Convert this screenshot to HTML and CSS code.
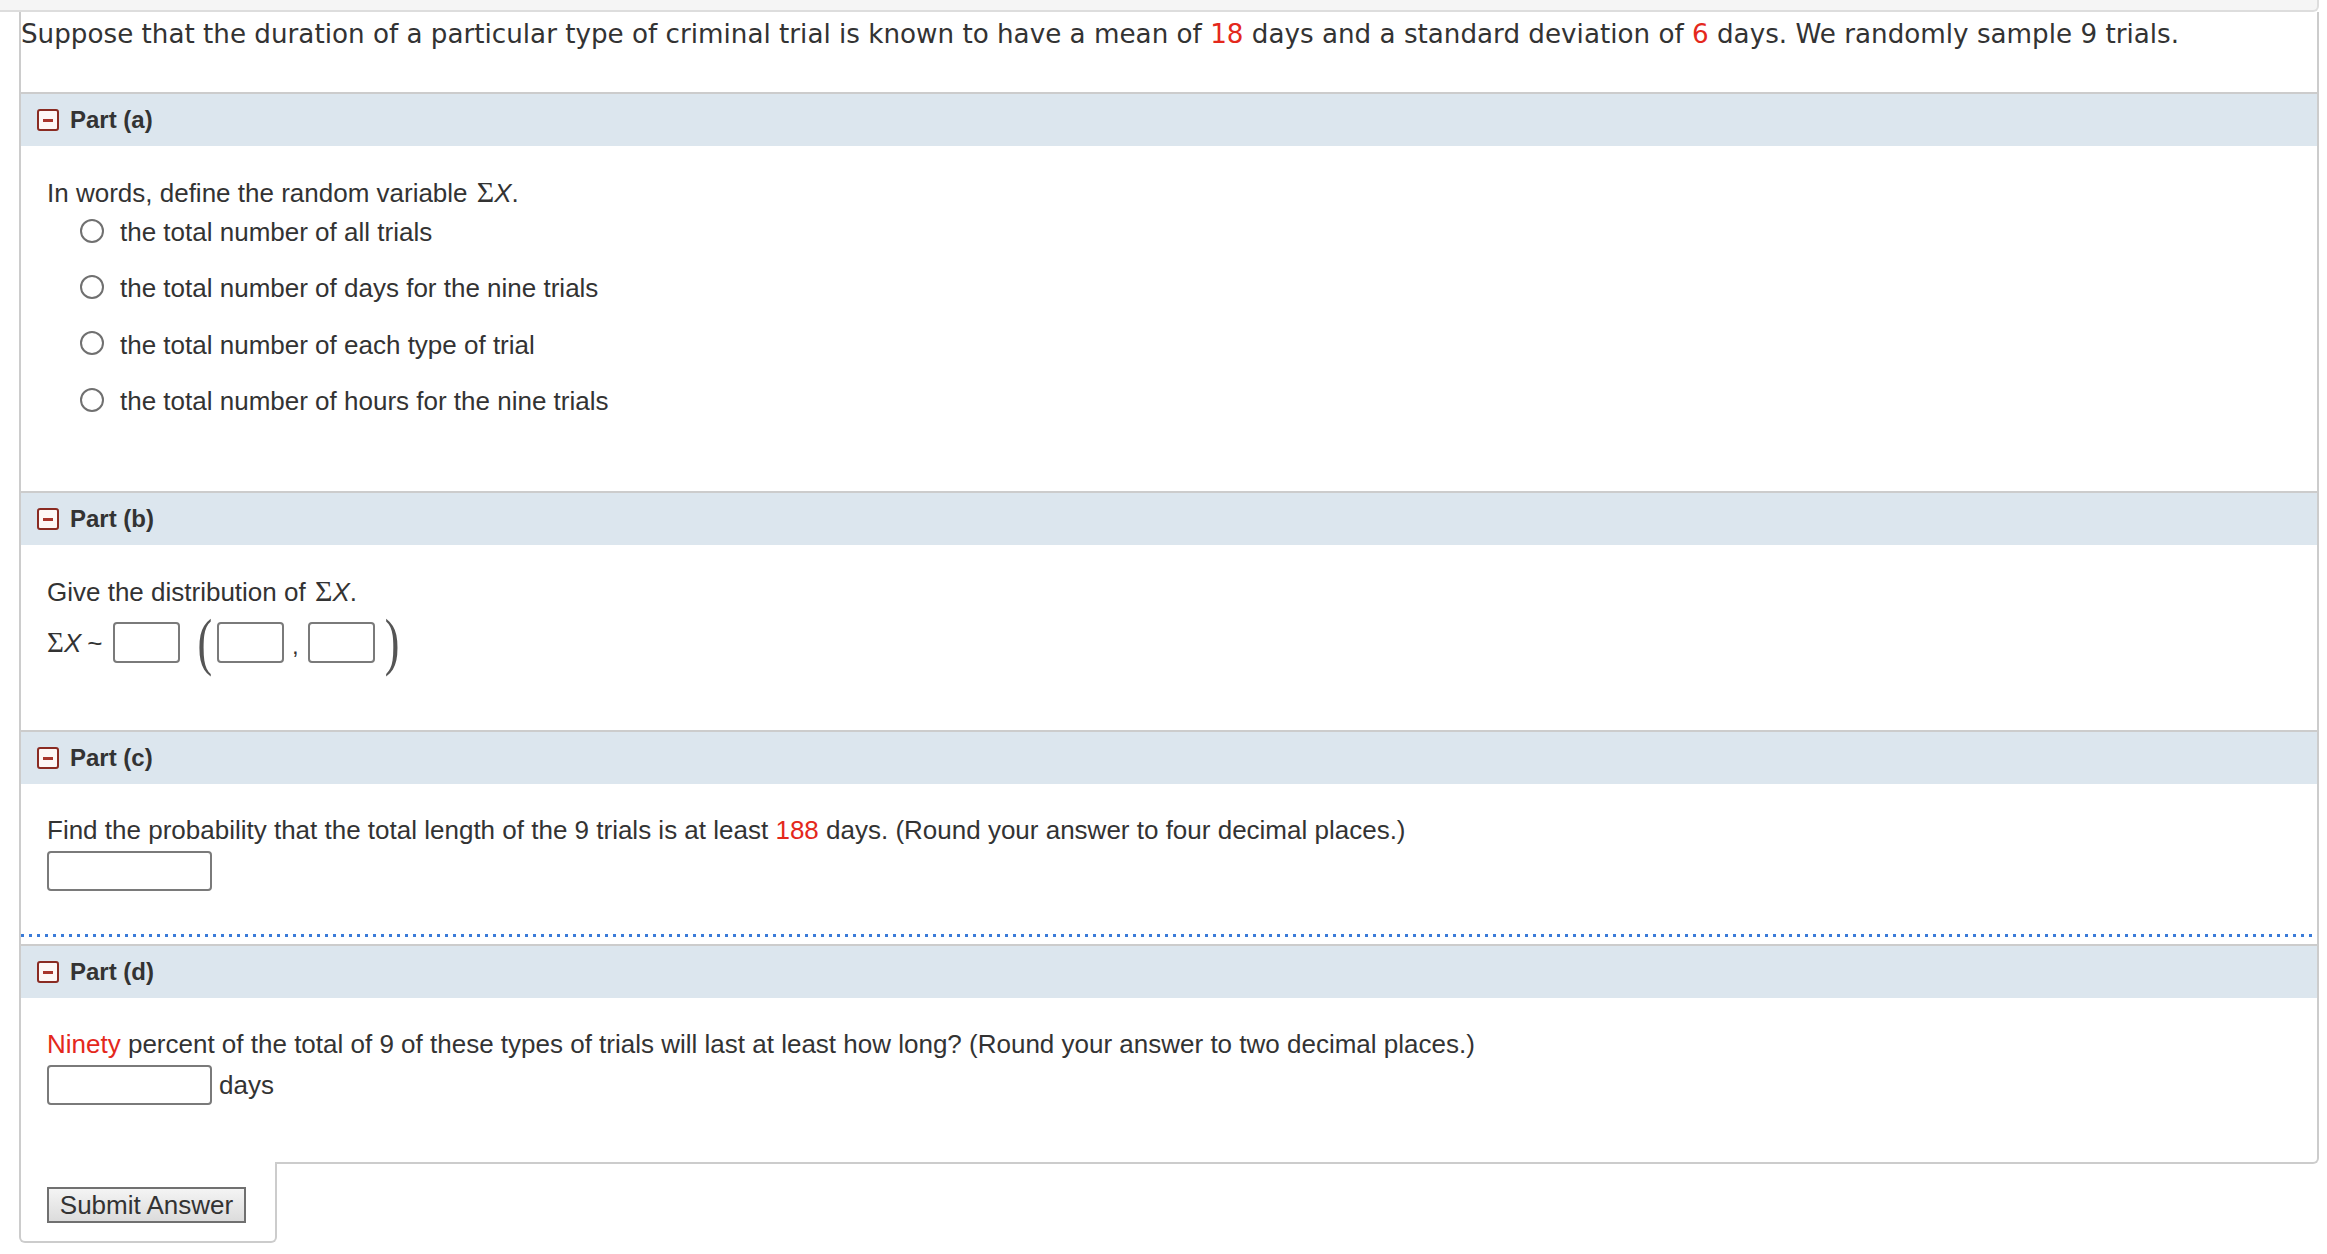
FILE: index.html
```html
<!DOCTYPE html>
<html lang="en">
<head>
<meta charset="utf-8">
<title>Question</title>
<link rel="stylesheet" href="styles.css">
</head>
<body>
<div class="band"></div>
<div class="qbox">
  <div class="intro">Suppose that the duration of a particular type of criminal trial is known to have a mean of <span class="red">18</span> days and a standard deviation of <span class="red">6</span> days. We randomly sample 9 trials.</div>

  <section class="part">
    <div class="phead"><span class="toggle"></span><span class="ptitle">Part (a)</span></div>
    <div class="pbody pa">
      <p class="prompt">In words, define the random variable <span class="math"><span class="sig">&Sigma;</span><i>X</i></span>.</p>
      <ul class="opts">
        <li><span class="radio"></span>the total number of all trials</li>
        <li><span class="radio"></span>the total number of days for the nine trials</li>
        <li><span class="radio"></span>the total number of each type of trial</li>
        <li><span class="radio"></span>the total number of hours for the nine trials</li>
      </ul>
    </div>
  </section>

  <section class="part">
    <div class="phead"><span class="toggle"></span><span class="ptitle">Part (b)</span></div>
    <div class="pbody pb">
      <p class="prompt">Give the distribution of <span class="math"><span class="sig">&Sigma;</span><i>X</i></span>.</p>
      <div class="dist">
        <span class="sx"><span class="sig">&Sigma;</span><i>X</i></span>
        <span class="tilde">~</span>
        <span class="box b1"></span>
        <span class="paren po">(</span>
        <span class="box b2"></span>
        <span class="comma">,</span>
        <span class="box b3"></span>
        <span class="paren pc">)</span>
      </div>
    </div>
  </section>

  <section class="part">
    <div class="phead"><span class="toggle"></span><span class="ptitle">Part (c)</span></div>
    <div class="pbody pcc">
      <p class="prompt">Find the probability that the total length of the 9 trials is at least <span class="red">188</span> days. (Round your answer to four decimal places.)</p>
      <div class="ansrow"><span class="field"></span></div>
    </div>
    <div class="dots"></div>
  </section>

  <section class="part">
    <div class="phead"><span class="toggle"></span><span class="ptitle">Part (d)</span></div>
    <div class="pbody pd">
      <p class="prompt"><span class="red">Ninety</span> percent of the total of 9 of these types of trials will last at least how long? (Round your answer to two decimal places.)</p>
      <div class="ansrow"><span class="field"></span><span class="unit">days</span></div>
    </div>
  </section>
</div>
<div class="tab"><button class="submit" type="button">Submit Answer</button></div>
</body>
</html>
```

FILE: styles.css
```css
html, body {
  margin: 0;
  padding: 0;
  background: #ffffff;
}

body {
  color: #333333;
  font-family: "Liberation Sans", Arial, sans-serif;
  font-size: 26px;
  line-height: 28px;
}

.band {
  box-sizing: border-box;
  width: 2319px;
  height: 12px;
  background: #f5f5f5;
  border-bottom: 2px solid #dddddd;
  border-right: 2px solid #dddddd;
  border-bottom-right-radius: 6px;
}

.qbox {
  box-sizing: border-box;
  width: 2300px;
  margin-left: 19px;
  border-left: 2px solid #cccccc;
  border-right: 2px solid #cccccc;
  border-bottom: 2px solid #cccccc;
  border-bottom-right-radius: 6px;
  background: #ffffff;
}

.intro {
  font-family: "DejaVu Sans", Verdana, sans-serif;
  font-size: 26.2px;
  line-height: 28px;
  padding: 8px 0 44px 0;
  white-space: nowrap;
}

.red {
  color: #e4281c;
}

.phead {
  display: flex;
  align-items: center;
  height: 52px;
  border-top: 2px solid #cccccc;
  background: #dce6ee;
  padding-left: 16px;
}

.toggle {
  box-sizing: border-box;
  width: 22px;
  height: 22px;
  border: 2px solid #8a2b22;
  border-radius: 3px;
  background: #fdf7f6;
  display: flex;
  align-items: center;
  justify-content: center;
}

.toggle::after {
  content: "";
  width: 10px;
  height: 3px;
  background: #a8352c;
}

.ptitle {
  margin-left: 11px;
  font-size: 24px;
  font-weight: bold;
  color: #333333;
}

.pbody {
  padding-left: 26px;
  padding-top: 32px;
}

.prompt {
  margin: 0;
  white-space: nowrap;
}

.math {
  margin-left: 2px;
}

.sig {
  font-family: "Liberation Serif", "Times New Roman", serif;
  font-size: 30px;
}

.math i,
.sx i {
  font-family: "Liberation Sans", Arial, sans-serif;
  font-style: italic;
  font-size: 26px;
}

.pa {
  padding-bottom: 76px;
}

.opts {
  list-style: none;
  margin: 11px 0 0 34px;
  padding: 0;
  display: flex;
  flex-direction: column;
  gap: 28.4px;
}

.opts li {
  display: flex;
  align-items: center;
  height: 28px;
}

.radio {
  box-sizing: border-box;
  width: 24px;
  height: 24px;
  border: 2px solid #707070;
  border-radius: 50%;
  margin-left: -1px;
  margin-right: 16px;
  margin-bottom: 3px;
  background: #ffffff;
}

.pb {
  padding-bottom: 58px;
}

.dist {
  display: flex;
  align-items: center;
  height: 59px;
  margin-top: 7px;
}

.sx .sig {
  font-size: 29px;
}

.tilde {
  margin-left: 6px;
  font-size: 26px;
}

.box {
  box-sizing: border-box;
  width: 67px;
  height: 41px;
  border: 2px solid #7a7a7a;
  border-radius: 4px;
  background: #ffffff;
}

.b1 {
  margin-left: 11px;
}

.paren {
  font-family: "Liberation Serif", "Times New Roman", serif;
  font-size: 44px;
  line-height: 44px;
  color: #555555;
  transform: scaleY(1.45);
  display: inline-block;
}

.po {
  margin-left: 17px;
}

.b2 {
  margin-left: 5px;
}

.comma {
  margin: 6px 9px 0 8px;
  font-size: 24px;
}

.pc {
  margin-left: 10px;
}

.pcc {
  padding-bottom: 43.5px;
}

.ansrow {
  display: flex;
  align-items: center;
  margin-top: 6.5px;
}

.pd .ansrow {
  margin-top: 7px;
}

.field {
  box-sizing: border-box;
  width: 165px;
  height: 40px;
  border: 2px solid #7a7a7a;
  border-radius: 4px;
  background: #ffffff;
}

.unit {
  margin-left: 7px;
}

.dots {
  height: 3px;
  margin: 0 2px 7px 0;
  background: repeating-linear-gradient(to right, #3a7bd8 0, #3a7bd8 3px, transparent 3px, transparent 8px);
}

.pd {
  padding-bottom: 57px;
}

.tab {
  box-sizing: border-box;
  width: 258px;
  margin-left: 19px;
  margin-top: -2px;
  padding: 25px 0 18px 26px;
  background: #ffffff;
  border-left: 2px solid #cccccc;
  border-right: 2px solid #cccccc;
  border-bottom: 2px solid #cccccc;
  border-bottom-left-radius: 6px;
  border-bottom-right-radius: 6px;
}

.submit {
  display: block;
  box-sizing: border-box;
  width: 199px;
  height: 36px;
  padding: 0;
  margin: 0;
  font-family: "Liberation Sans", Arial, sans-serif;
  font-size: 26px;
  line-height: 30px;
  color: #333333;
  border: 2px solid #707070;
  border-radius: 0;
  background: linear-gradient(#f4f4f4, #dcdcdc);
}
```
